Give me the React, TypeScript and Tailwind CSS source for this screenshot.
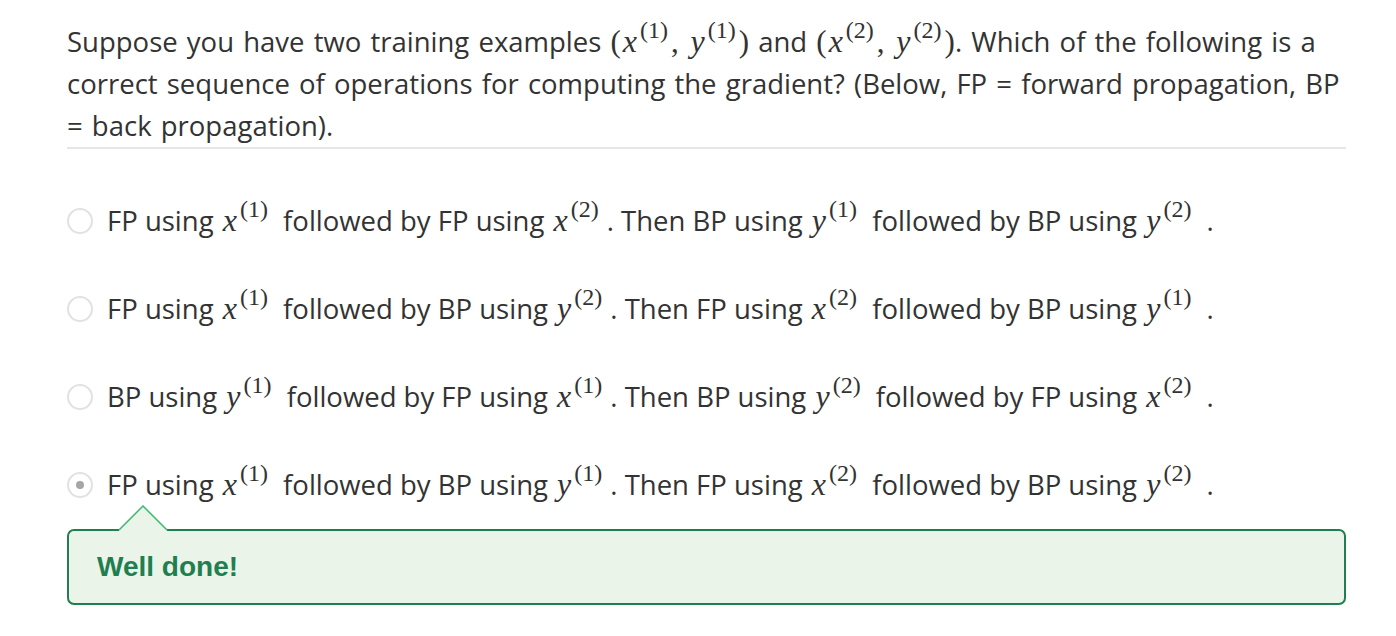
import React from 'react';

// inline math bits: italic variable with a parenthesised superscript
function V({ v, n, tight }: { v: string; n: string; tight?: boolean }) {
  return (
    <span className={`ml-[2px] font-['Liberation_Serif',serif] text-[32px] leading-none whitespace-nowrap ${tight ? 'mr-[3px]' : 'mr-[8px]'}`}>
      <i>{v}</i>
      <span className="relative -top-[14px] ml-[3px] text-[24px] leading-none">({n})</span>
    </span>
  );
}

function P({ c }: { c: string }) {
  return <span className="font-['Liberation_Serif',serif] text-[31px] leading-none">{c}</span>;
}

function Radio({ checked }: { checked?: boolean }) {
  return (
    <span className="flex h-[26px] w-[26px] shrink-0 items-center justify-center rounded-full border-2 border-[#e2e2e2] bg-white">
      {checked && <span className="h-[8px] w-[8px] rounded-full bg-[#a6a6a6]" />}
    </span>
  );
}

type Part = string | { v: string; n: string };

const options: Part[][] = [
  ['FP using ', { v: 'x', n: '1' }, ' followed by FP using ', { v: 'x', n: '2' }, '. Then BP using ', { v: 'y', n: '1' }, ' followed by BP using ', { v: 'y', n: '2' }, ' .'],
  ['FP using ', { v: 'x', n: '1' }, ' followed by BP using ', { v: 'y', n: '2' }, '. Then FP using ', { v: 'x', n: '2' }, ' followed by BP using ', { v: 'y', n: '1' }, ' .'],
  ['BP using ', { v: 'y', n: '1' }, ' followed by FP using ', { v: 'x', n: '1' }, '. Then BP using ', { v: 'y', n: '2' }, ' followed by FP using ', { v: 'x', n: '2' }, ' .'],
  ['FP using ', { v: 'x', n: '1' }, ' followed by BP using ', { v: 'y', n: '1' }, '. Then FP using ', { v: 'x', n: '2' }, ' followed by BP using ', { v: 'y', n: '2' }, ' .'],
];

function Line({ parts }: { parts: Part[] }) {
  return (
    <span className="leading-[42px]">
      {parts.map((p, i) =>
        typeof p === 'string' ? (
          <span key={i} className="whitespace-pre">{p}</span>
        ) : (
          <V key={i} v={p.v} n={p.n} />
        )
      )}
    </span>
  );
}

export default function App() {
  return (
    <div className="min-h-[636px] bg-white px-[67px] pt-[21px] font-['Open_Sans',sans-serif] text-[27.5px] text-[#333]">
      <p className="w-[1279px] leading-[42px] [word-spacing:2px]">
        Suppose you have two training examples <P c="(" />
        <V v="x" n="1" tight />
        <P c=", " />
        <V v="y" n="1" tight />
        <P c=")" /> and <P c="(" />
        <V v="x" n="2" tight />
        <P c=", " />
        <V v="y" n="2" tight />
        <P c=")" />. Which of the following is a correct sequence of operations for computing the gradient? (Below, FP = forward propagation, BP = back propagation).
      </p>
      <div className="h-[2px] w-[1279px] bg-[#e6e6e6]" />

      <div className="mt-[28px] w-[1279px]">
        {options.map((o, i) => (
          <div key={i} className="flex h-[88px] items-center gap-[14px]">
            <Radio checked={i === 3} />
            <Line parts={o} />
          </div>
        ))}

        <div className="relative rounded-[7px] border-2 border-[#1f7f50] bg-[#ebf4e9] px-[28px] py-[20px]">
          <svg className="absolute left-[49px] top-[-26px]" width="50" height="28" viewBox="0 0 50 28">
            <rect x="1" y="23" width="48" height="5" fill="#ebf4e9" />
            <polyline points="1,25 25,1 49,25" fill="#ebf4e9" stroke="#3dba72" strokeWidth="1.5" />
          </svg>
          <span className="block font-['Liberation_Sans',sans-serif] text-[28px] font-bold leading-[32px] text-[#1f7f50]">Well done!</span>
        </div>
      </div>
    </div>
  );
}
